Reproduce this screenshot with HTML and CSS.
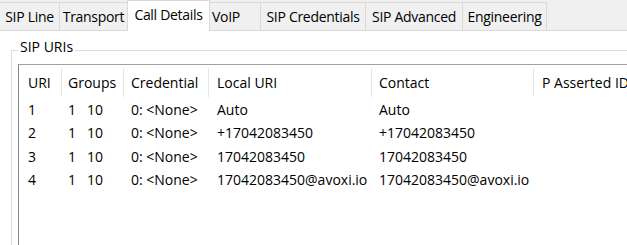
FILE: index.html
```html
<!DOCTYPE html>
<html>
<head>
<meta charset="utf-8">
<link rel="stylesheet" href="styles.css">
</head>
<body>
<div class="tabbar">
  <div class="tab w1">SIP Line</div>
  <div class="tab w2">Transport</div>
  <div class="tab active w3">Call Details</div>
  <div class="tab w4">VoIP</div>
  <div class="tab w5">SIP Credentials</div>
  <div class="tab w6">SIP Advanced</div>
  <div class="tab w7">Engineering</div>
</div>
<div class="panel">
  <div class="group">
    <div class="legend">SIP URIs</div>
    <div class="listview">
      <div class="row header">
        <div class="cell c1">URI</div>
        <div class="cell c2">Groups</div>
        <div class="cell c3">Credential</div>
        <div class="cell c4">Local URI</div>
        <div class="cell c5">Contact</div>
        <div class="cell c6">P Asserted ID</div>
      </div>
      <div class="row">
        <div class="cell c1">1</div>
        <div class="cell c2">1&nbsp;&nbsp;&nbsp;10</div>
        <div class="cell c3">0: &lt;None&gt;</div>
        <div class="cell c4">Auto</div>
        <div class="cell c5">Auto</div>
        <div class="cell c6"></div>
      </div>
      <div class="row">
        <div class="cell c1">2</div>
        <div class="cell c2">1&nbsp;&nbsp;&nbsp;10</div>
        <div class="cell c3">0: &lt;None&gt;</div>
        <div class="cell c4">+17042083450</div>
        <div class="cell c5">+17042083450</div>
        <div class="cell c6"></div>
      </div>
      <div class="row">
        <div class="cell c1">3</div>
        <div class="cell c2">1&nbsp;&nbsp;&nbsp;10</div>
        <div class="cell c3">0: &lt;None&gt;</div>
        <div class="cell c4">17042083450</div>
        <div class="cell c5">17042083450</div>
        <div class="cell c6"></div>
      </div>
      <div class="row">
        <div class="cell c1">4</div>
        <div class="cell c2">1&nbsp;&nbsp;&nbsp;10</div>
        <div class="cell c3">0: &lt;None&gt;</div>
        <div class="cell c4">17042083450@avoxi.io</div>
        <div class="cell c5">17042083450@avoxi.io</div>
        <div class="cell c6"></div>
      </div>
    </div>
  </div>
</div>
</body>
</html>
```
FILE: styles.css
```css
html, body {
  margin: 0;
  padding: 0;
  background: #ffffff;
  overflow: hidden;
}
body {
  width: 627px;
  height: 245px;
  font-family: "Open Sans", "Noto Sans", sans-serif;
  font-size: 14px;
  color: #000000;
}
.tabbar {
  display: flex;
  align-items: flex-end;
  height: 30px;
  background: #f0f0f0;
  border-bottom: 1px solid #d9d9d9;
}
.tab {
  box-sizing: border-box;
  height: 28px;
  margin-right: -1px;
  border: 1px solid #d9d9d9;
  border-bottom: none;
  background: #f0f0f0;
  text-align: center;
  line-height: 27px;
  white-space: nowrap;
  letter-spacing: -0.3px;
}
.tab.active {
  position: relative;
  z-index: 1;
  height: 31px;
  margin-bottom: -1px;
  background: #ffffff;
  line-height: 28px;
}
.w1 { width: 60px; border-left: none; }
.w2 { width: 69px; }
.w3 { width: 83px; }
.w4 { width: 52px; text-align: left; padding-left: 2px; }
.w5 { width: 106px; }
.w6 { width: 98px; }
.w7 { width: 85px; }

.panel {
  padding: 19px 0 0 11px;
}
.group {
  position: relative;
  border-top: 1px solid #dcdcdc;
  border-left: 1px solid #dcdcdc;
  padding: 13px 0 0 6px;
}
.legend {
  position: absolute;
  top: -13px;
  left: 6px;
  padding: 0 2px;
  line-height: 18px;
  background: #ffffff;
}
.listview {
  border-top: 1px solid #a0a0a0;
  border-left: 1px solid #828790;
  height: 180px;
  overflow: hidden;
}
.row {
  display: grid;
  grid-template-columns: 43px 62px 85px 163px 162px 1fr;
  height: 23.3px;
  align-items: center;
  white-space: nowrap;
  overflow: hidden;
}
.row.header {
  height: 33px;
  align-items: stretch;
}
.header .cell {
  margin: 3px 0 1px;
  border-right: 1px solid #e5e5e5;
  display: flex;
  align-items: center;
}
.header .c6 { border-right: none; }
.cell { overflow: hidden; }
.c1 { padding-left: 9px; }
.c2 { padding-left: 6px; }
.c3 { padding-left: 7px; }
.c4 { padding-left: 8px; }
.c5 { padding-left: 7px; }
.c6 { padding-left: 8px; }
```
